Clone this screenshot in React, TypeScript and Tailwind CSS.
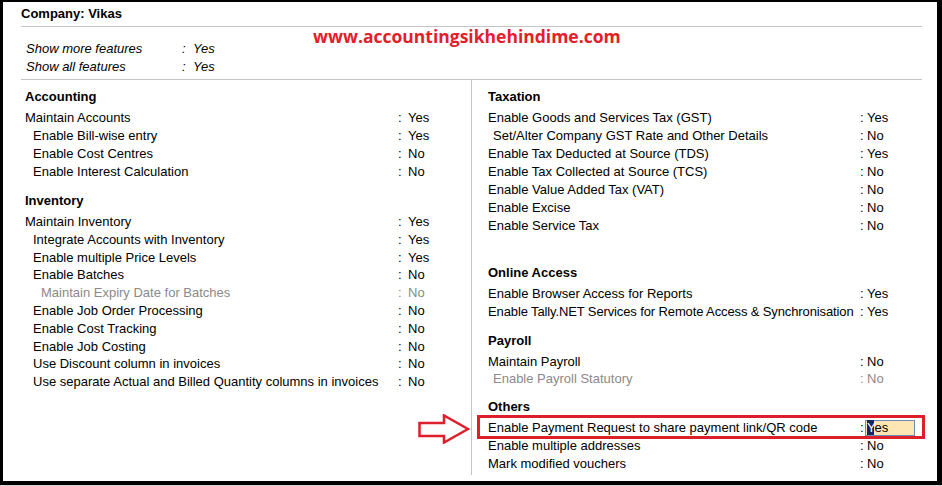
import React from 'react';

type Item = { label: string; value: string; indent?: number; dim?: boolean; tight?: boolean };

const accounting: Item[] = [
  { label: 'Maintain Accounts', value: 'Yes' },
  { label: 'Enable Bill-wise entry', value: 'Yes', indent: 1 },
  { label: 'Enable Cost Centres', value: 'No', indent: 1 },
  { label: 'Enable Interest Calculation', value: 'No', indent: 1 },
];

const inventory: Item[] = [
  { label: 'Maintain Inventory', value: 'Yes' },
  { label: 'Integrate Accounts with Inventory', value: 'Yes', indent: 1 },
  { label: 'Enable multiple Price Levels', value: 'Yes', indent: 1 },
  { label: 'Enable Batches', value: 'No', indent: 1 },
  { label: 'Maintain Expiry Date for Batches', value: 'No', indent: 2, dim: true },
  { label: 'Enable Job Order Processing', value: 'No', indent: 1 },
  { label: 'Enable Cost Tracking', value: 'No', indent: 1 },
  { label: 'Enable Job Costing', value: 'No', indent: 1 },
  { label: 'Use Discount column in invoices', value: 'No', indent: 1 },
  { label: 'Use separate Actual and Billed Quantity columns in invoices', value: 'No', indent: 1 },
];

const taxation: Item[] = [
  { label: 'Enable Goods and Services Tax (GST)', value: 'Yes' },
  { label: 'Set/Alter Company GST Rate and Other Details', value: 'No', indent: 1 },
  { label: 'Enable Tax Deducted at Source (TDS)', value: 'Yes' },
  { label: 'Enable Tax Collected at Source (TCS)', value: 'No' },
  { label: 'Enable Value Added Tax (VAT)', value: 'No' },
  { label: 'Enable Excise', value: 'No' },
  { label: 'Enable Service Tax', value: 'No' },
];

const online: Item[] = [
  { label: 'Enable Browser Access for Reports', value: 'Yes' },
  { label: 'Enable Tally.NET Services for Remote Access & Synchronisation', value: 'Yes', tight: true },
];

const payroll: Item[] = [
  { label: 'Maintain Payroll', value: 'No' },
  { label: 'Enable Payroll Statutory', value: 'No', indent: 1, dim: true },
];

const LeftRow = ({ item, short }: { item: Item; short?: boolean }) => (
  <div
    className={`flex ${short ? 'h-[17.8px]' : 'h-[18px]'} leading-[18px] ${item.dim ? 'text-[#8a8a8a]' : 'text-black'}`}
  >
    <span className={`w-[373px] whitespace-nowrap ${item.indent === 2 ? 'pl-[16px]' : item.indent === 1 ? 'pl-[8px]' : ''}`}>
      {item.label}
    </span>
    <span className="w-[10px]">:</span>
    <span>{item.value}</span>
  </div>
);

const RightRow = ({ item, short }: { item: Item; short?: boolean }) => (
  <div
    className={`flex ${short ? 'h-[17px]' : 'h-[18px]'} leading-[18px] ${item.dim ? 'text-[#8a8a8a]' : 'text-black'}`}
  >
    <span
      className={`w-[372px] whitespace-nowrap ${item.indent ? 'pl-[5px]' : ''} ${item.tight ? 'tracking-[-0.12px]' : ''}`}
    >
      {item.label}
    </span>
    <span className="w-[7px]">:</span>
    <span>{item.value}</span>
  </div>
);

const Heading = ({ children, className = '' }: { children: React.ReactNode; className?: string }) => (
  <div className={`h-[21px] leading-[18px] font-bold ${className}`}>{children}</div>
);

export default function App() {
  return (
    <div className="w-[942px] h-[486px] bg-black pt-[2px] pl-[3px] pr-[5px] pb-[4px] border-b border-[#d4d4d4] font-['Liberation_Sans',Arial,sans-serif] text-[13px] text-black">
      <div className="h-full bg-white pl-[18px] pr-[15px] flex flex-col">
        <div className="h-[25px] pt-[3px] leading-[18px] font-bold border-b border-[#c4c4c4]">Company: Vikas</div>

        <div className="relative h-[53px] pt-[13px] border-b border-[#c4c4c4] italic">
          <div className="flex h-[18px] leading-[18px] pl-[5px]">
            <span className="w-[156px]">Show more features</span>
            <span className="w-[11px]">:</span>
            <span>Yes</span>
          </div>
          <div className="flex h-[18px] leading-[18px] pl-[5px]">
            <span className="w-[156px]">Show all features</span>
            <span className="w-[11px]">:</span>
            <span>Yes</span>
          </div>
          <div className="absolute left-[292px] top-[-2px] not-italic font-bold text-[17.5px] leading-[22px] text-[#e3202a] font-['Open_Sans',sans-serif]">
            www.accountingsikhehindime.com
          </div>
        </div>

        <div className="flex h-[395px]">
          <div className="w-[450px] pl-[4px] pt-[8px]">
            <Heading>Accounting</Heading>
            {accounting.map((it) => (
              <LeftRow key={it.label} item={it} />
            ))}
            <Heading className="mt-[11px]">Inventory</Heading>
            {inventory.map((it) => (
              <LeftRow key={it.label} item={it} short />
            ))}
          </div>

          <div className="flex-1 border-l border-[#c4c4c4] pl-[16px] pt-[8px]">
            <Heading>Taxation</Heading>
            {taxation.map((it) => (
              <RightRow key={it.label} item={it} />
            ))}
            <Heading className="mt-[29px]">Online Access</Heading>
            {online.map((it) => (
              <RightRow key={it.label} item={it} />
            ))}
            <Heading className="mt-[11px]">Payroll</Heading>
            <RightRow item={payroll[0]} short />
            <RightRow item={payroll[1]} />
            <Heading className="mt-[10px]">Others</Heading>

            <div className="relative flex h-[18px] leading-[18px]">
              <span className="w-[372px] whitespace-nowrap">Enable Payment Request to share payment link/QR code</span>
              <span className="w-[5px]">:</span>
              <span className="mt-[1px] h-[16px] w-[50px] leading-[14px] bg-[#fde6b3] border border-[#6d8db4] pl-[1px]">
                <span className="bg-[#1b2463] text-white">Y</span>es
              </span>
              <div className="absolute left-[-11px] right-[-3px] top-[-4px] bottom-[-2px] border-[3px] border-[#dc1f2a]" />
              <svg className="absolute left-[-70px] top-[-5px]" width="52" height="30" viewBox="0 0 52 30">
                <polygon
                  points="1.5,9 26,9 26,1.5 50,15 26,28.5 26,22 1.5,22"
                  fill="white"
                  stroke="#dc1f2a"
                  strokeWidth="2.5"
                  strokeLinejoin="miter"
                />
              </svg>
            </div>
            <RightRow item={{ label: 'Enable multiple addresses', value: 'No' }} />
            <RightRow item={{ label: 'Mark modified vouchers', value: 'No' }} />
          </div>
        </div>
      </div>
    </div>
  );
}
